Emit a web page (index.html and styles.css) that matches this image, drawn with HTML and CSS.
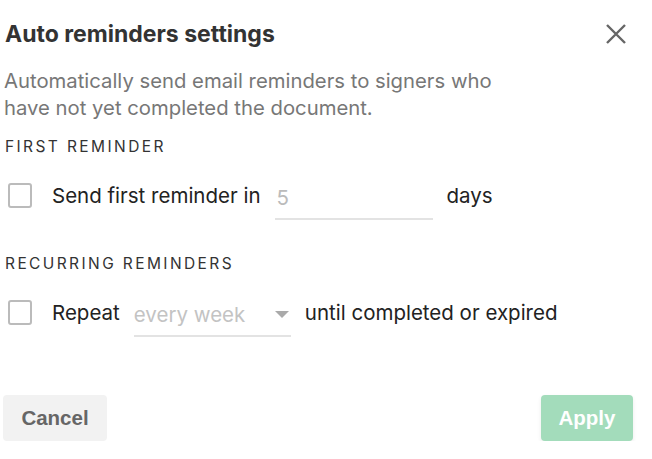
FILE: index.html
```html
<!DOCTYPE html>
<html lang="en">
<head>
  <meta charset="UTF-8" />
  <meta name="viewport" content="width=device-width, initial-scale=1.0" />
  <title>Auto reminders settings</title>
  <link rel="stylesheet" href="styles.css">
</head>
<body>
  <div class="dialog">
    <div class="header">
      <h2>Auto reminders settings</h2>
      <button class="close" aria-label="Close">
        <svg width="20" height="20" viewBox="0 0 20 20"><path d="M1 1L19 19M19 1L1 19" stroke="#666" stroke-width="2.4" fill="none"/></svg>
      </button>
    </div>
    <p class="intro">Automatically send email reminders to signers who<br>have not yet completed the document.</p>

    <div class="label">First reminder</div>
    <div class="row first-row">
      <span class="checkbox"></span>
      <span>Send first reminder in</span>
      <input class="field" type="text" placeholder="5">
      <span>days</span>
    </div>

    <div class="label recurring">Recurring reminders</div>
    <div class="row">
      <span class="checkbox"></span>
      <span>Repeat</span>
      <div class="select">
        <span>every week</span>
        <span class="arrow"></span>
      </div>
      <span>until completed or expired</span>
    </div>

    <div class="footer">
      <button class="btn cancel">Cancel</button>
      <button class="btn apply">Apply</button>
    </div>
  </div>
</body>
</html>
```

FILE: styles.css
```css
body {
  margin: 0;
  font-family: Inter, 'Noto Sans', sans-serif;
  color: #222;
  background: #fff;
}
.dialog {
  width: 630px;
  padding: 18px 3px 0 3px;
}
.header {
  display: flex;
  justify-content: space-between;
  align-items: center;
}
h2 {
  margin: 0 0 0 2px;
  font-size: 23px;
  font-weight: 700;
  color: #333;
  line-height: 32px;
}
.close {
  background: none;
  border: none;
  padding: 0;
  margin-right: 7px;
  cursor: pointer;
  display: flex;
}
.intro {
  margin: 17px 0 0 1px;
  font-size: 20.3px;
  line-height: 27px;
  color: #777;
}
.label {
  margin: 16px 0 0 2px;
  font-size: 15.5px;
  letter-spacing: 2.4px;
  text-transform: uppercase;
  color: #333;
}
.recurring {
  margin-top: 42px;
}
.row {
  display: flex;
  align-items: center;
  gap: 14px;
  margin-top: 22px;
  font-size: 20.5px;
  height: 34px;
}
.checkbox {
  width: 20px;
  height: 21px;
  border: 2px solid #bbb;
  border-radius: 3px;
  margin: 0 6px 0 5px;
}
.field {
  width: 154px;
  border: none;
  border-bottom: 2px solid #e3e3e3;
  font: inherit;
  padding: 4px 2px 8px;
  margin-top: 10px;
  outline: none;
}
.field::placeholder {
  color: #bbb;
}
.select {
  width: 157px;
  display: flex;
  justify-content: space-between;
  align-items: center;
  border-bottom: 2px solid #e3e3e3;
  color: #c3c3c3;
  padding: 4px 0 8px;
  margin-top: 10px;
}
.arrow {
  width: 0;
  height: 0;
  border-left: 7px solid transparent;
  border-right: 7px solid transparent;
  border-top: 7px solid #aaa;
  margin-right: 2px;
}
.footer {
  display: flex;
  justify-content: space-between;
  margin-top: 66px;
}
.btn {
  height: 46px;
  border: none;
  border-radius: 4px;
  font-family: 'Liberation Sans', Arial, sans-serif;
  font-weight: 700;
  font-size: 20.5px;
  cursor: pointer;
}
.cancel {
  width: 104px;
  background: #f2f2f2;
  color: #666;
}
.apply {
  width: 92px;
  background: #a3dcbb;
  color: #fff;
  box-shadow: 0 2px 4px rgba(0, 0, 0, 0.08);
}
```
